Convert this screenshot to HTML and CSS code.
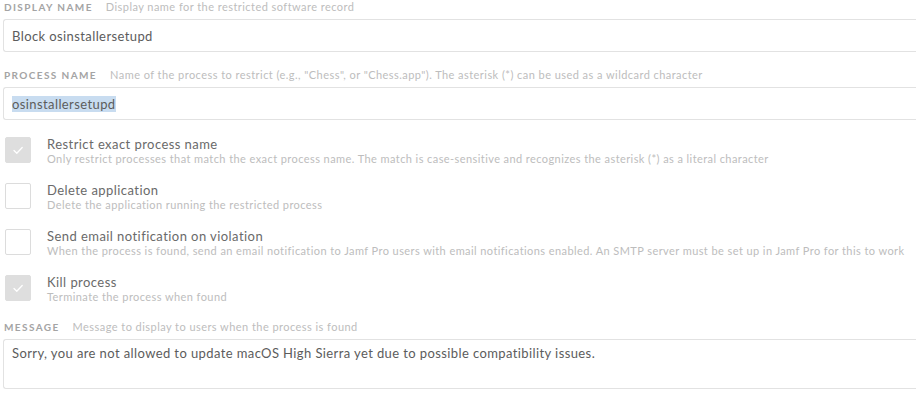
FILE: index.html
```html
<!DOCTYPE html>
<html lang="en">
<head>
    <meta charset="UTF-8">
    <meta name="viewport" content="width=device-width, initial-scale=1.0">
    <title>Restricted Software</title>
    <link rel="stylesheet" href="styles.css">
</head>
<body>
    <div class="form">
        <div class="field">
            <div class="label">
                <span class="label-name">Display Name</span>
                <span class="label-help">Display name for the restricted software record</span>
            </div>
            <div class="input">Block osinstallersetupd</div>
        </div>

        <div class="field">
            <div class="label">
                <span class="label-name">Process Name</span>
                <span class="label-help">Name of the process to restrict (e.g., "Chess", or "Chess.app"). The asterisk (*) can be used as a wildcard character</span>
            </div>
            <div class="input"><span class="selected">osinstallersetupd</span></div>
        </div>

        <div class="checks">
            <div class="check">
                <div class="box checked">
                    <svg viewBox="0 0 26 26" width="26" height="26"><path d="M9 13.5l2.8 2.8 5.4-5.8" fill="none" stroke="#fff" stroke-width="1.3" stroke-linecap="round" stroke-linejoin="round"/></svg>
                </div>
                <div class="check-text">
                    <div class="check-title">Restrict exact process name</div>
                    <div class="check-help">Only restrict processes that match the exact process name. The match is case-sensitive and recognizes the asterisk (*) as a literal character</div>
                </div>
            </div>
            <div class="check">
                <div class="box"></div>
                <div class="check-text">
                    <div class="check-title">Delete application</div>
                    <div class="check-help">Delete the application running the restricted process</div>
                </div>
            </div>
            <div class="check">
                <div class="box"></div>
                <div class="check-text">
                    <div class="check-title">Send email notification on violation</div>
                    <div class="check-help">When the process is found, send an email notification to Jamf Pro users with email notifications enabled. An SMTP server must be set up in Jamf Pro for this to work</div>
                </div>
            </div>
            <div class="check">
                <div class="box checked">
                    <svg viewBox="0 0 26 26" width="26" height="26"><path d="M9 13.5l2.8 2.8 5.4-5.8" fill="none" stroke="#fff" stroke-width="1.3" stroke-linecap="round" stroke-linejoin="round"/></svg>
                </div>
                <div class="check-text">
                    <div class="check-title">Kill process</div>
                    <div class="check-help">Terminate the process when found</div>
                </div>
            </div>
        </div>

        <div class="field">
            <div class="label">
                <span class="label-name">Message</span>
                <span class="label-help">Message to display to users when the process is found</span>
            </div>
            <div class="input textarea">Sorry, you are not allowed to update macOS High Sierra yet due to possible compatibility issues.</div>
        </div>
    </div>
</body>
</html>
```

FILE: styles.css
```css
body {
    margin: 0;
    background: #fff;
    font-family: Lato, "Open Sans", sans-serif;
    color: #666;
}

.form {
    padding: 0 0 0 3px;
    width: 916px;
    box-sizing: border-box;
}

.label {
    display: flex;
    align-items: baseline;
    gap: 13px;
    height: 19px;
    padding-left: 1px;
    line-height: 13px;
}
.label-name {
    font-size: 10px;
    font-weight: 700;
    letter-spacing: 1.4px;
    text-transform: uppercase;
    color: #a4a4a4;
}
.label-help {
    font-size: 11px;
    letter-spacing: 0.45px;
    color: #bdbdbd;
}

.input {
    height: 33px;
    box-sizing: border-box;
    border: 1px solid #e2e2e2;
    border-right: none;
    border-radius: 3px 0 0 3px;
    padding: 7px 8px 0;
    font-size: 13px;
    letter-spacing: 0.4px;
    line-height: 18px;
    color: #5c5c5c;
    margin-bottom: 16px;
}
.selected {
    background: #c8dcf0;
}
.textarea {
    height: 50px;
    padding-top: 4px;
    margin-bottom: 0;
}

.checks {
    display: flex;
    flex-direction: column;
    gap: 20px;
    padding: 1px 0 19px 2px;
}
.check {
    display: flex;
    gap: 16px;
    height: 26px;
}
.box {
    flex: none;
    width: 26px;
    height: 26px;
    box-sizing: border-box;
    border: 1px solid #dcdcdc;
    border-radius: 2px;
    background: #fff;
}
.box.checked {
    border-color: #dedede;
    background: #dedede;
}
.box svg {
    display: block;
    margin: -1px;
}
.check-text {
    margin-top: -1px;
}
.check-title {
    font-size: 13px;
    letter-spacing: 0.44px;
    line-height: 16px;
    color: #6a6a6a;
}
.check-help {
    font-size: 11px;
    letter-spacing: 0.42px;
    line-height: 14px;
    color: #bdbdbd;
    white-space: nowrap;
}
```
